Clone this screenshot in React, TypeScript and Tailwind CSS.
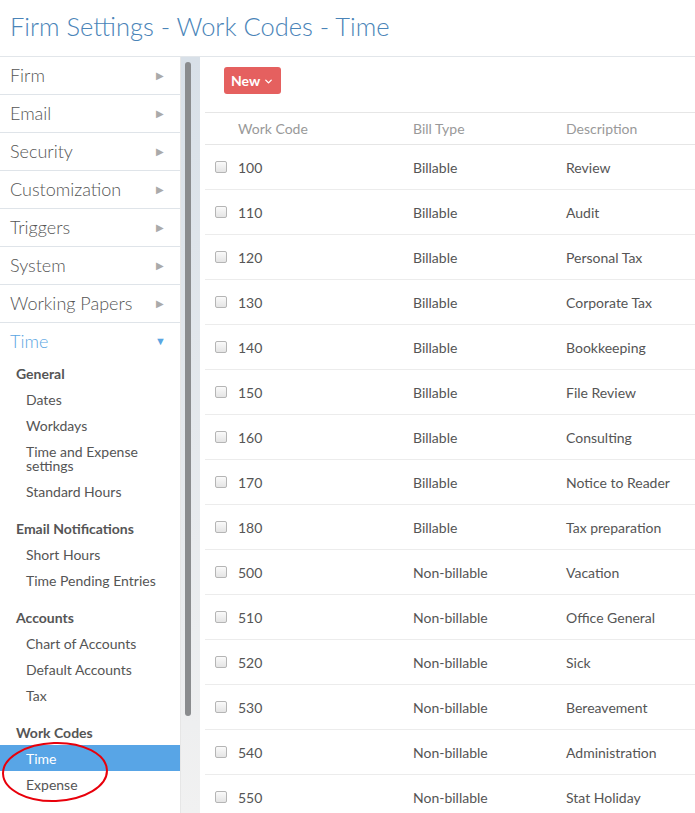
import { ChevronDown } from 'lucide-react';

const topItems = ['Firm', 'Email', 'Security', 'Customization', 'Triggers', 'System', 'Working Papers'];

const groups = [
  { title: 'General', items: ['Dates', 'Workdays', 'Time and Expense settings', 'Standard Hours'] },
  { title: 'Email Notifications', items: ['Short Hours', 'Time Pending Entries'] },
  { title: 'Accounts', items: ['Chart of Accounts', 'Default Accounts', 'Tax'] },
  { title: 'Work Codes', items: ['Time', 'Expense'] },
];

const rows = [
  ['100', 'Billable', 'Review'],
  ['110', 'Billable', 'Audit'],
  ['120', 'Billable', 'Personal Tax'],
  ['130', 'Billable', 'Corporate Tax'],
  ['140', 'Billable', 'Bookkeeping'],
  ['150', 'Billable', 'File Review'],
  ['160', 'Billable', 'Consulting'],
  ['170', 'Billable', 'Notice to Reader'],
  ['180', 'Billable', 'Tax preparation'],
  ['500', 'Non-billable', 'Vacation'],
  ['510', 'Non-billable', 'Office General'],
  ['520', 'Non-billable', 'Sick'],
  ['530', 'Non-billable', 'Bereavement'],
  ['540', 'Non-billable', 'Administration'],
  ['550', 'Non-billable', 'Stat Holiday'],
];

export default function App() {
  return (
    <div className="relative h-[813px] w-[695px] overflow-hidden bg-white font-['Lato','Liberation_Sans',sans-serif] text-[#555]">
      {/* Header */}
      <div className="h-[57px] border-b border-[#e2e6ea] pl-[10px] pt-[9px]">
        <h1 className="text-[25.5px] font-light leading-[34px] text-[#4a84b8]">Firm Settings - Work Codes - Time</h1>
      </div>

      <div className="flex h-[756px]">
        {/* Sidebar */}
        <div className="w-[180px] shrink-0">
          {topItems.map(item => (
            <div key={item} className="flex h-[38px] items-center justify-between border-b border-[#dfe4e9] pl-[10px] pr-[16px]">
              <span className="text-[18px] font-light text-[#555]">{item}</span>
              <span className="text-[10px] text-[#aaa]">▶</span>
            </div>
          ))}
          <div className="flex h-[37px] items-center justify-between pl-[10px] pr-[14px]">
            <span className="text-[18px] font-light text-[#5aa6e2]">Time</span>
            <span className="text-[11px] text-[#5aa6e2]">▼</span>
          </div>
          {groups.map((g, gi) => (
            <div key={g.title} className={gi > 0 ? 'mt-[11px]' : ''}>
              <div className="flex h-[26px] items-center pl-[16px] text-[14px] font-bold text-[#555]">{g.title}</div>
              {g.items.map(item => {
                const active = g.title === 'Work Codes' && item === 'Time';
                return (
                  <div
                    key={item}
                    className={`pb-[5px] pl-[26px] pr-[16px] pt-[7px] text-[14px] leading-[14px] ${active ? 'bg-[#58a5e6] text-white' : 'text-[#555]'}`}
                  >
                    {item}
                  </div>
                );
              })}
            </div>
          ))}
        </div>

        {/* Scrollbar */}
        <div className="w-[20px] shrink-0 border-l border-[#e6e6e6] bg-gradient-to-b from-[#d8e0e8] to-[#f1f1f1] pl-[4px] pt-[5px]">
          <div className="h-[654px] w-[6px] rounded-full bg-[#8a8c8e]" />
        </div>

        {/* Content */}
        <div className="flex-1 pl-[5px]">
          <div className="h-[55px] pl-[19px] pt-[10px]">
            <button className="flex h-[27px] items-center gap-[3px] rounded-[3px] bg-[#e5605f] px-[7px] text-[14px] font-bold text-white">
              New
              <ChevronDown size={11} strokeWidth={3} className="mt-[2px]" />
            </button>
          </div>
          <div className="border-t border-[#e6e6e6]">
            <div className="flex h-[32px] items-center border-b border-[#e6e6e6] text-[14px] text-[#999]">
              <div className="w-[33px]" />
              <div className="w-[175px]">Work Code</div>
              <div className="w-[153px]">Bill Type</div>
              <div>Description</div>
            </div>
            {rows.map(([code, type, desc]) => (
              <div key={code} className="flex h-[45px] items-center border-b border-[#ececec] text-[14px] text-[#555]">
                <div className="w-[33px] pl-[10px]">
                  <div className="h-[12px] w-[12px] rounded-[2px] border border-[#b5b5b5] bg-gradient-to-b from-[#fafafa] to-[#e4e4e4]" />
                </div>
                <div className="w-[175px]">{code}</div>
                <div className="w-[153px]">{type}</div>
                <div className="whitespace-nowrap">{desc}</div>
              </div>
            ))}
          </div>
        </div>
      </div>

      {/* Red annotation circle */}
      <svg className="pointer-events-none absolute left-0 top-[738px]" width="115" height="70" viewBox="0 0 115 70">
        <ellipse cx="55" cy="34" rx="52" ry="29" fill="none" stroke="#e8000b" strokeWidth="2" transform="rotate(-2 55 34)" />
      </svg>
    </div>
  );
}
